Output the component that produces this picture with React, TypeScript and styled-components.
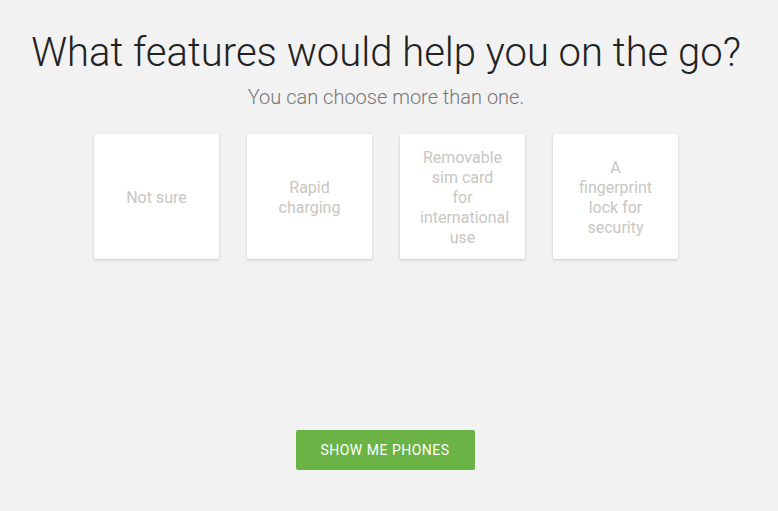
import { createGlobalStyle, styled } from 'styled-components';

const GlobalStyle = createGlobalStyle`
  html, body {
    margin: 0;
    padding: 0;
    background: #f2f2f2;
    font-family: Roboto, "Liberation Sans", sans-serif;
  }
`;

const Page = styled.main`
  display: flex;
  flex-direction: column;
  align-items: center;
  padding: 28px 6px 0 0;
`;

const Title = styled.h1`
  margin: 0;
  font-size: 40px;
  font-weight: 300;
  line-height: 50px;
  color: #222;
`;

const Subtitle = styled.p`
  margin: 7px 0 0;
  font-size: 20px;
  font-weight: 300;
  line-height: 24px;
  color: #777;
`;

const Options = styled.section`
  display: flex;
  gap: 28px;
  margin-top: 25px;
`;

const Option = styled.button`
  display: flex;
  align-items: center;
  justify-content: center;
  width: 125px;
  height: 125px;
  padding: 2px 20px 0;
  box-sizing: border-box;
  border: none;
  border-radius: 2px;
  background: #fff;
  box-shadow: 0 1px 3px rgba(0, 0, 0, 0.18);
  font-family: inherit;
  font-size: 16px;
  line-height: 20px;
  color: #c9c6c3;
  text-align: center;
  cursor: pointer;
`;

const Label = styled.span`
  display: block;
  width: 85px;
`;

const Submit = styled.button`
  margin: 171px 2px 0 0;
  width: 179px;
  height: 40px;
  border: none;
  border-radius: 2px;
  background: #6ab344;
  color: #fff;
  font-family: inherit;
  font-size: 14px;
  font-weight: 400;
  letter-spacing: 0.5px;
  text-transform: uppercase;
  cursor: pointer;
`;

const features = [
  'Not sure',
  'Rapid charging',
  'Removable sim card for international use',
  'A fingerprint lock for security',
];

function App() {
  return (
    <>
      <GlobalStyle />
      <Page>
        <Title>What features would help you on the go?</Title>
        <Subtitle>You can choose more than one.</Subtitle>
        <Options>
          {features.map((f) => (
            <Option key={f}>
              <Label>{f}</Label>
            </Option>
          ))}
        </Options>
        <Submit>Show me phones</Submit>
      </Page>
    </>
  );
}

export default App;
